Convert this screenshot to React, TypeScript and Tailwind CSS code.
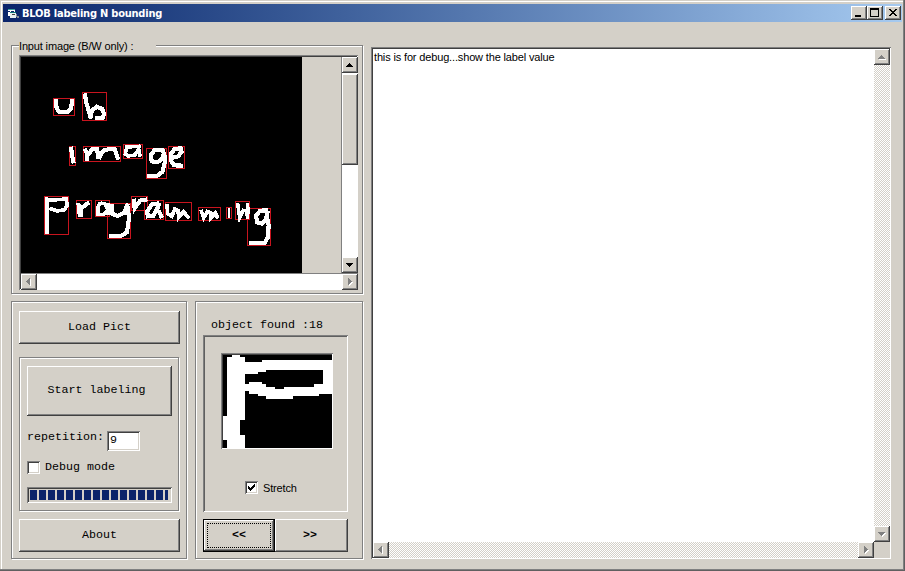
import type { ReactNode } from "react";

const raised =
  "bg-[#d4d0c8] shadow-[inset_-1px_-1px_#404040,inset_1px_1px_#fff,inset_-2px_-2px_#808080]";
const sunken =
  "shadow-[inset_1px_1px_#808080,inset_-1px_-1px_#fff,inset_2px_2px_#404040,inset_-2px_-2px_#d4d0c8]";
const etched = "border border-[#808080] shadow-[1px_1px_#fff,inset_1px_1px_#fff]";
const dither =
  "bg-[repeating-conic-gradient(#ffffff_0_25%,#d4d0c8_0_50%)] bg-[length:2px_2px]";
const mono = "font-['Liberation_Mono',monospace] text-[11.67px] leading-[14px] whitespace-pre";
const sans =
  "font-['Liberation_Sans',sans-serif] text-[11px] leading-[14px] tracking-[-0.15px] whitespace-pre";

const arrows = {
  up: "M4 10h7v-1h-1v-1h-1v-1h-1v-1h-1v1h-1v1h-1v1h-1z",
  down: "M4 6h7v1h-1v1h-1v1h-1v1h-1v-1h-1v-1h-1v-1h-1z",
  left: "M9 4v7h-1v-1h-1v-1h-1v-1h-1v-1h1v-1h1v-1h1v-1z",
  right: "M6 4v7h1v-1h1v-1h1v-1h1v-1h-1v-1h-1v-1h-1v-1z",
};

function ScrollButton({ dir, off }: { dir: keyof typeof arrows; off?: boolean }) {
  return (
    <div className={`h-4 w-4 shrink-0 ${raised}`}>
      <svg width="16" height="16" viewBox="0 0 16 16" shapeRendering="crispEdges">
        {off && <path d={arrows[dir]} fill="#fff" transform="translate(1 1)" />}
        <path d={arrows[dir]} fill={off ? "#808080" : "#000"} />
      </svg>
    </div>
  );
}

function Button({ className, children }: { className: string; children: ReactNode }) {
  return (
    <button className={`flex shrink-0 items-center justify-center pb-[2px] ${mono} ${raised} ${className}`}>
      {children}
    </button>
  );
}

function Checkbox({ checked }: { checked?: boolean }) {
  return (
    <div className={`h-[13px] w-[13px] shrink-0 bg-white ${sunken}`}>
      {checked && (
        <svg width="13" height="13" viewBox="0 0 13 13" shapeRendering="crispEdges">
          <path d="M3 5h1v1h1v1h1v-1h1v-1h1v-1h1v-1h1v3h-1v1h-1v1h-1v1h-1v1h-1v-1h-1v-1h-1z" />
        </svg>
      )}
    </div>
  );
}

function TitleBar() {
  return (
    <div className="flex h-[18px] items-center bg-linear-to-r from-[#0a246a] to-[#a6caf0] pr-[1px] pl-[4px]">
      <svg width="13" height="14" viewBox="0 0 13 14" shapeRendering="crispEdges">
        <path d="M1 3h7v7h-7z" fill="#fff" />
        <path d="M1 3h7v1h-7z" fill="#3c9c9c" />
        <path d="M1 5h2v1h-2zM4 5h3v1h-3z" fill="#0a246a" />
        <path d="M3 6h6v6h-6z" fill="#e8f0f0" />
        <path d="M3 6h6v1h-6z" fill="#107878" />
        <path d="M5 8h3v1h-3z" fill="#404040" />
        <path d="M9 8h1v3h-1zM10 10h2v2h-2z" fill="#8a9098" />
      </svg>
      <span className="ml-[2px] grow pt-[1px] font-['DejaVu_Sans_Condensed','DejaVu_Sans',sans-serif] text-[11px] leading-[14px] font-bold tracking-[-0.22px] whitespace-pre text-white">
        BLOB labeling N bounding
      </span>
      <div className={`h-[14px] w-4 ${raised}`}>
        <svg width="16" height="14" shapeRendering="crispEdges">
          <path d="M4 9h6v2h-6z" />
        </svg>
      </div>
      <div className={`h-[14px] w-4 ${raised}`}>
        <svg width="16" height="14" shapeRendering="crispEdges">
          <path fillRule="evenodd" d="M3 2h9v9h-9zM4 4v6h7v-6z" />
        </svg>
      </div>
      <div className={`ml-[2px] h-[14px] w-4 ${raised}`}>
        <svg width="16" height="14" shapeRendering="crispEdges">
          <path d="M4 3h2v1h1v1h2v-1h1v-1h2v1h-1v1h-1v1h-1v1h1v1h1v1h1v1h-2v-1h-1v-1h-2v1h-1v1h-2v-1h1v-1h1v-1h1v-1h-1v-1h-1v-1h-1z" />
        </svg>
      </div>
    </div>
  );
}

const boxes = [
  [53, 98, 74, 115], [82, 92, 106, 120], [69, 146, 75, 165], [83, 146, 120, 161],
  [123, 144, 142, 158], [146, 148, 166, 178], [168, 146, 184, 168], [44, 196, 68, 234],
  [76, 200, 91, 218], [95, 200, 109, 216], [107, 203, 130, 238], [131, 196, 147, 210],
  [144, 200, 163, 219], [165, 202, 191, 220], [198, 207, 220, 220], [226, 207, 231, 218],
  [235, 201, 249, 219], [247, 208, 270, 245],
];

function InputImage() {
  return (
    <svg
      width="281"
      height="216"
      viewBox="21 57 281 216"
      className="block shrink-0 bg-black"
      shapeRendering="crispEdges"
    >
      <g fill="none" stroke="#c8141e">
        {boxes.map(([l, t, r, b]) => (
          <rect key={`${l}-${t}`} x={l + 0.5} y={t + 0.5} width={r - l} height={b - t} />
        ))}
      </g>
      <g fill="none" stroke="#fff" strokeWidth="12.5">
        <g transform="translate(20 80) scale(.33333)">
          <path d="M107 58L110 86L120 97L142 97L153 86L157 58" />
          <path d="M194 40L200 72L213 116M211 114L216 92L230 80L246 86L252 102L248 114L226 113" />
          <path d="M153 200L156 225L161 250" />
          <path d="M193 206L202 220L202 242M203 226L218 206L232 208L234 236M236 236L250 212L270 206L284 208L290 226L296 239" />
          <path d="M362 199L320 201L316 222L324 228L345 225L356 206L361 230" strokeWidth="10.5" />
          <path d="M434 212L404 210L393 224L395 244L412 247L426 238L433 216M433 216L434 250L427 276L410 288L382 289" />
          <path d="M453 235L474 229L485 216L482 205L464 207L454 220L453 242L462 256L490 257" />
        </g>
        <g transform="translate(30 185) scale(.33333)">
          <path d="M50 37L52 100L50 147M56 46L108 42L112 60L104 74L82 78L58 70" strokeWidth="11" />
          <path d="M145 54L150 96M151 96L155 68L178 52" />
          <path d="M211 51L204 66L204 88L222 88L233 74L225 56L212 54M234 54L234 90" strokeWidth="10" />
          <path d="M247 58L247 86L262 93L282 84L294 55M293 65L297 100L291 142L274 152L236 153" />
          <path d="M311 41L314 70L330 47L352 43" />
          <path d="M388 55L366 58L351 80L354 94L369 93L382 70L389 54M386 76L396 99" />
          <path d="M411 58L413 86L426 94L434 72L444 76L446 97L460 80L478 100" strokeWidth="11" />
          <path d="M513 75L521 99L532 80L543 84L543 99L556 84L564 101" strokeWidth="11" />
          <path d="M597 68L597 98" strokeWidth="8" />
          <path d="M623 55L629 98L640 76L649 78L653 101M652 53L655 86" strokeWidth="10.5" />
          <path d="M714 76L690 77L678 93L682 112L696 116L708 102L714 77M711 94L716 122L713 158L705 173L656 175" />
        </g>
      </g>
    </svg>
  );
}

function InputFrame() {
  return (
    <fieldset className={`h-[249px] w-[352px] shrink-0 pt-[9px] pl-[7px] ${etched}`}>
      <div className={`-mt-[17px] h-[17px] w-[137px] bg-[#d4d0c8] pt-[1px] ${sans}`}>
        Input image (B/W only) :
      </div>
      <div className={`h-[235px] w-[339px] p-[2px] pr-0 ${sunken}`}>
        <div className="flex h-[216px] w-[337px]">
          <InputImage />
          <div className="w-[39px] shrink-0" />
          <div className="flex w-4 shrink-0 flex-col border-l border-[#808080] bg-white">
            <ScrollButton dir="up" />
            <div className={`mt-[1px] h-[91px] w-4 ${raised}`} />
            <div className="grow" />
            <ScrollButton dir="down" />
          </div>
        </div>
        <div className="flex h-4 w-[337px] border-t border-[#808080] bg-white">
          <ScrollButton dir="left" off />
          <div className="grow" />
          <ScrollButton dir="right" off />
        </div>
      </div>
    </fieldset>
  );
}

function ControlsFrame() {
  return (
    <section className={`flex h-[258px] w-[176px] shrink-0 flex-col pt-[9px] pl-[7px] ${etched}`}>
      <Button className="h-[33px] w-[161px]">Load Pict</Button>
      <div className={`mt-[13px] flex h-[154px] w-[160px] shrink-0 flex-col pt-[8px] pl-[7px] ${etched}`}>
        <Button className="h-[50px] w-[145px] pr-[6px]">Start labeling</Button>
        <div className="mt-[15px] flex h-[20px]">
          <span className={`w-[80px] ${mono} -mt-[1px]`}>repetition:</span>
          <div className={`h-[20px] w-[33px] bg-white pt-[2px] pl-[3px] ${sunken} ${mono}`}>9</div>
        </div>
        <div className="mt-[10px] flex h-[13px] items-center">
          <Checkbox />
          <span className={`ml-[5px] pb-[2px] ${mono}`}>Debug mode</span>
        </div>
        <div className="mt-[13px] flex h-[16px] w-[145px] gap-[2px] py-[3px] pl-[3px] shadow-[inset_1px_1px_#808080,inset_-1px_-1px_#fff,inset_2px_2px_#404040]">
          {Array.from({ length: 15 }, (_, i) => (
            <i key={i} className="w-[7px] bg-[#0a246a]" />
          ))}
          <i className="w-[3px] bg-[#0a246a]" />
        </div>
      </div>
      <Button className="mt-[8px] h-[33px] w-[161px]">About</Button>
    </section>
  );
}

function ObjectFrame() {
  return (
    <section className={`flex h-[258px] w-[168px] shrink-0 flex-col pl-[7px] ${etched}`}>
      <div className={`mt-[16px] ml-[8px] h-[17px] ${mono}`}>object found :18</div>
      <div className="flex h-[177px] w-[145px] flex-col pt-[18px] shadow-[inset_1px_1px_#808080,inset_-1px_-1px_#fff,inset_2px_2px_#606060]">
        <div className={`ml-[18px] h-[96px] w-[112px] p-[2px] pr-[1px] pb-[1px] ${sunken}`}>
          <svg
            width="109"
            height="93"
            viewBox="98 194 328 280"
            preserveAspectRatio="none"
            className="block bg-black"
            shapeRendering="crispEdges"
          >
            <path
              fill="#fff"
              fillRule="evenodd"
              d="M111 200H125V194H150V200H164V216H216V210H426V311H387V318H309V326H228V318H204V311H177V303H164V390H150V435H164V474H111V450H98V378H111ZM164 252H204V246H228V240H399V282H372V290H282V296H255V290H228V282H216V276H177V282H164Z"
            />
          </svg>
        </div>
        <div className="mt-[32px] ml-[42px] flex h-[13px] items-center">
          <Checkbox checked />
          <span className={`ml-[5px] ${sans}`}>Stretch</span>
        </div>
      </div>
      <div className="mt-[7px] flex">
        <button className="flex h-[33px] w-[72px] border border-black bg-[#d4d0c8] p-[3px] shadow-[inset_-1px_-1px_#404040,inset_1px_1px_#fff,inset_-2px_-2px_#808080]">
          <span className={`flex h-full w-full items-center justify-center border border-dotted border-black pb-[2px] font-bold ${mono}`}>
            {"<<"}
          </span>
        </button>
        <Button className="h-[33px] w-[73px] pr-[3px] font-bold">{">>"}</Button>
      </div>
    </section>
  );
}

function DebugArea() {
  return (
    <div className={`mt-[2px] flex h-[512px] w-[520px] shrink-0 flex-col bg-white p-[2px] pr-[1px] pb-[1px] ${sunken}`}>
      <div className="flex h-[493px]">
        <div className={`grow pt-[1px] pl-[1px] ${sans}`}>
          this is for debug...show the label value
        </div>
        <div className={`flex w-4 flex-col justify-between ${dither}`}>
          <ScrollButton dir="up" off />
          <ScrollButton dir="down" off />
        </div>
      </div>
      <div className="flex h-4">
        <div className={`flex grow justify-between ${dither}`}>
          <ScrollButton dir="left" off />
          <ScrollButton dir="right" off />
        </div>
        <div className="w-4 bg-[#d4d0c8]" />
      </div>
    </div>
  );
}

export default function App() {
  return (
    <main className="h-[571px] w-[905px] overflow-hidden bg-[#d4d0c8] px-[3px] pt-[4px] text-black shadow-[inset_-1px_-1px_#606060,inset_-2px_-2px_#808080,inset_1px_1px_#d4d0c8,inset_2px_2px_#fff]">
      <TitleBar />
      <div className="flex pt-[23px] pl-[8px]">
        <div className="flex w-[360px] shrink-0 flex-col gap-[7px]">
          <InputFrame />
          <div className="flex gap-[8px]">
            <ControlsFrame />
            <ObjectFrame />
          </div>
        </div>
        <DebugArea />
      </div>
    </main>
  );
}
